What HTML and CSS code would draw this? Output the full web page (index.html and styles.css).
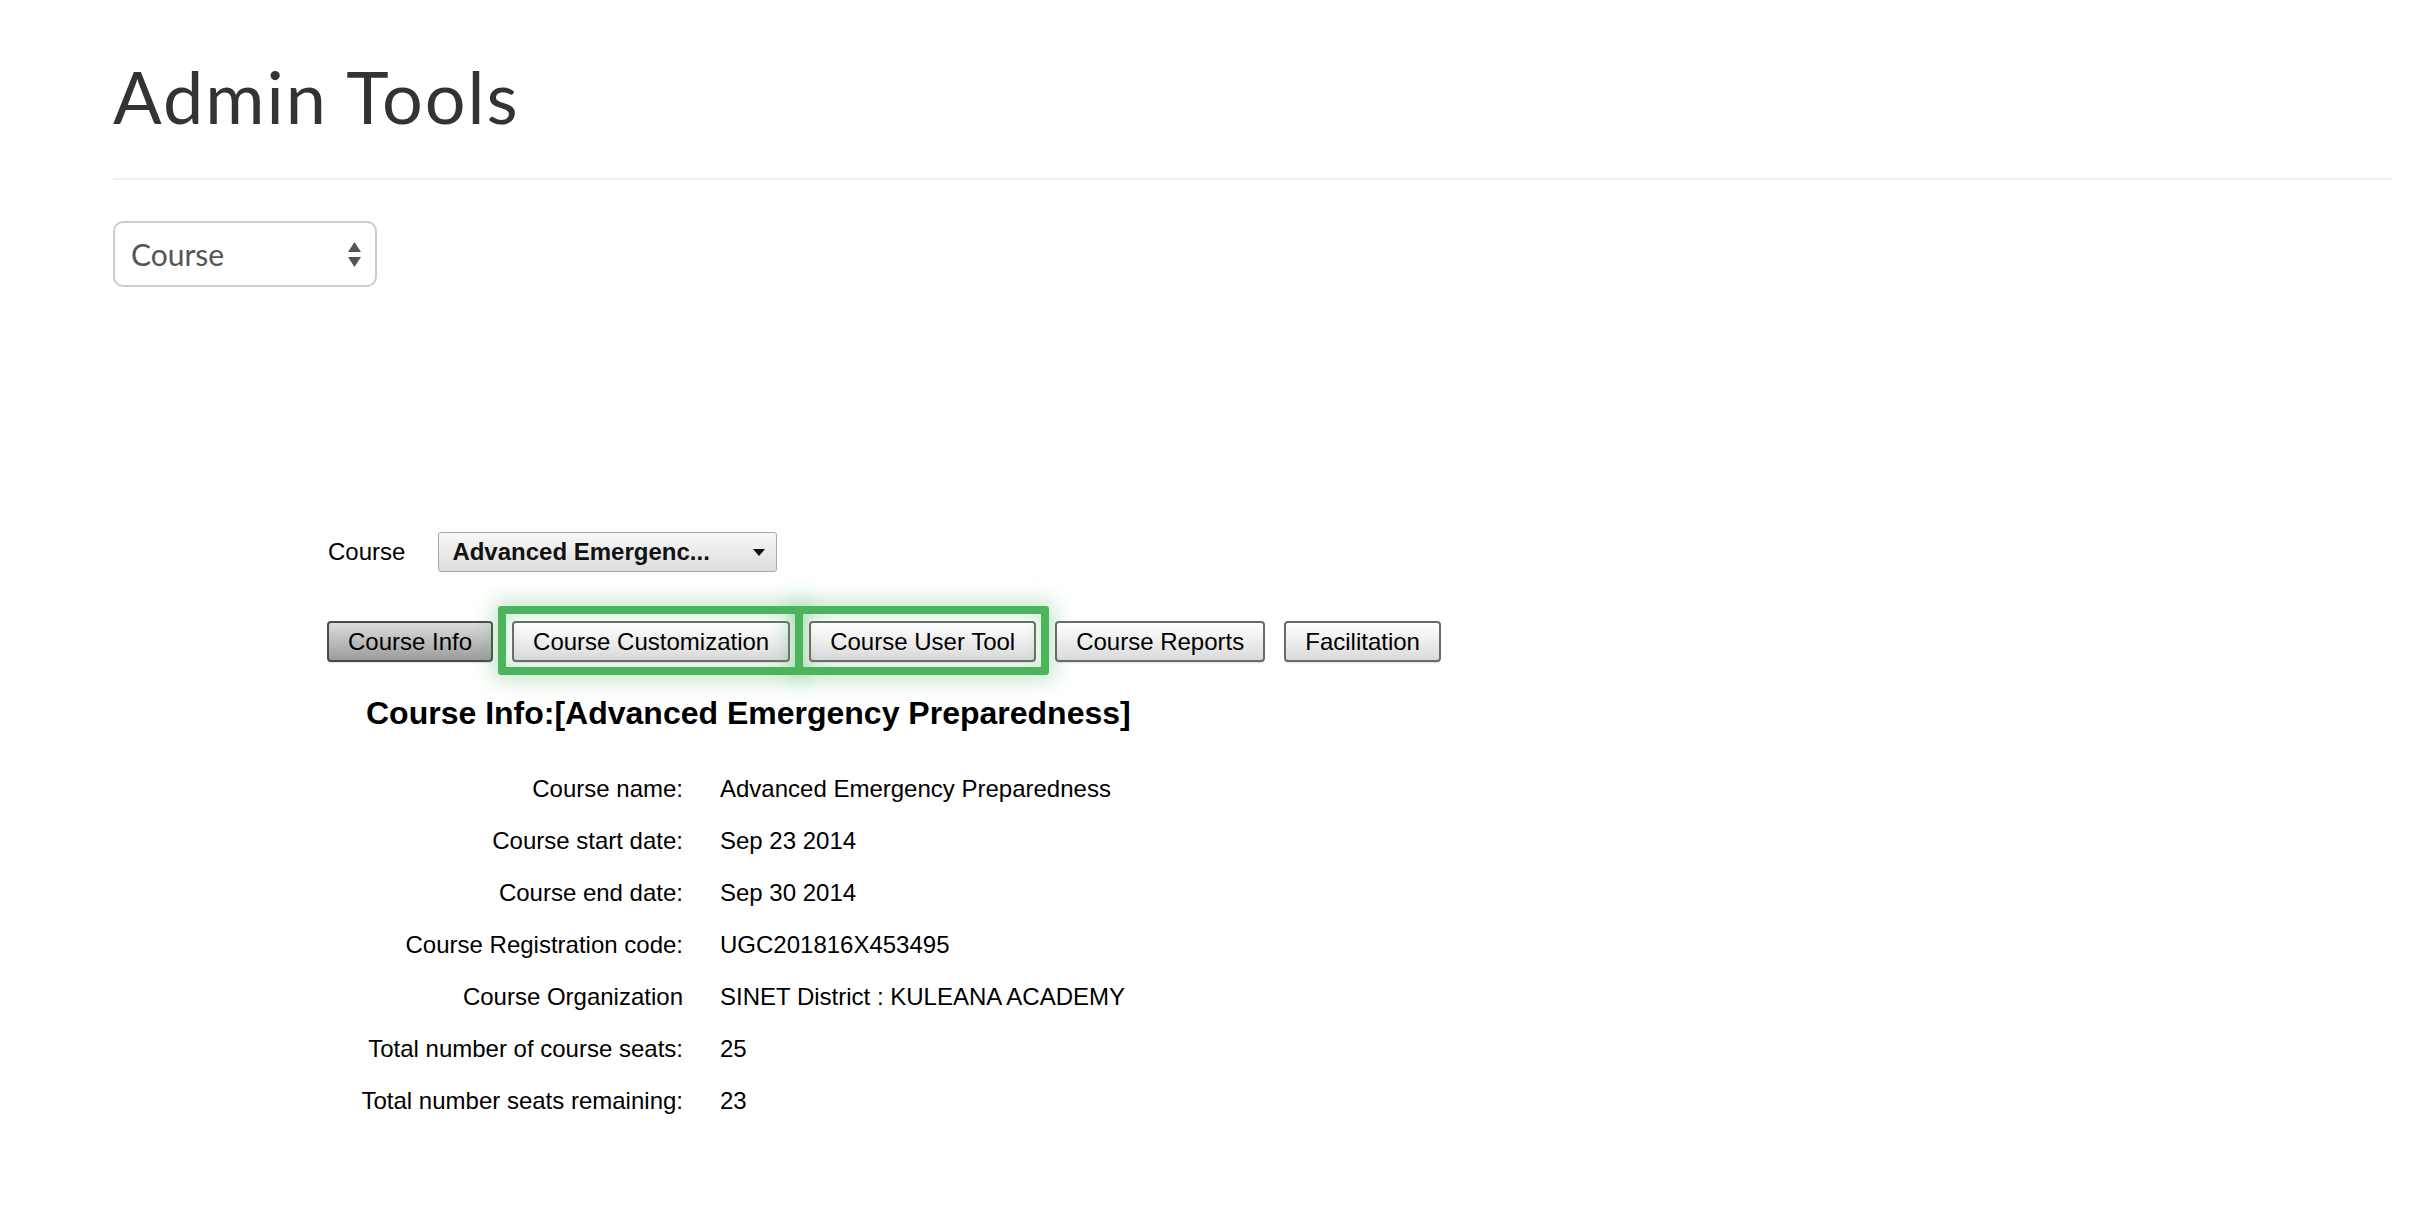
FILE: index.html
```html
<!DOCTYPE html>
<html lang="en">
<head>
<meta charset="utf-8">
<title>Admin Tools</title>
<link rel="stylesheet" href="styles.css">
</head>
<body>
<div class="page">
  <h1 class="title">Admin Tools</h1>
  <hr class="rule">
  <div class="select-lg">
    <span>Course</span>
    <svg class="updown" width="13" height="25" viewBox="0 0 13 25"><path d="M6.5 0 L13 10 L0 10 Z M0 15 L13 15 L6.5 25 Z" fill="#555"/></svg>
  </div>

  <div class="panel">
    <div class="course-row">
      <span class="course-label">Course</span>
      <div class="dropdown">
        <span>Advanced Emergenc...</span>
        <svg width="12" height="7" viewBox="0 0 12 7"><path d="M0 0 L12 0 L6 7 Z" fill="#111"/></svg>
      </div>
    </div>

    <div class="tabs">
      <button class="tab active">Course Info</button>
      <button class="tab hl">Course Customization</button>
      <button class="tab hl">Course User Tool</button>
      <button class="tab">Course Reports</button>
      <button class="tab">Facilitation</button>
    </div>

    <h2 class="info-title">Course Info:[Advanced Emergency Preparedness]</h2>

    <div class="info-grid">
      <div class="k">Course name:</div><div class="v">Advanced Emergency Preparedness</div>
      <div class="k">Course start date:</div><div class="v">Sep 23 2014</div>
      <div class="k">Course end date:</div><div class="v">Sep 30 2014</div>
      <div class="k">Course Registration code:</div><div class="v">UGC201816X453495</div>
      <div class="k">Course Organization</div><div class="v">SINET District : KULEANA ACADEMY</div>
      <div class="k">Total number of course seats:</div><div class="v">25</div>
      <div class="k">Total number seats remaining:</div><div class="v">23</div>
    </div>
  </div>
</div>
</body>
</html>
```
FILE: styles.css
```css
html, body {
  margin: 0;
  padding: 0;
  background: #ffffff;
}

.page {
  padding: 0 40px 0 113px;
}

.title {
  font-family: Lato, "Open Sans", sans-serif;
  font-weight: 400;
  font-size: 72px;
  line-height: 86px;
  letter-spacing: 2px;
  color: #333333;
  margin: 53px 0 0;
}

.rule {
  border: 0;
  height: 2px;
  background: #eeeeee;
  margin: 39px 0 0;
}

.select-lg {
  margin-top: 41px;
  width: 264px;
  height: 66px;
  box-sizing: border-box;
  border: 2px solid #cccccc;
  border-radius: 10px;
  display: flex;
  align-items: center;
  justify-content: space-between;
  padding: 0 14px 0 16px;
  font-family: Lato, "Open Sans", sans-serif;
  font-size: 30px;
  color: #555555;
}

.panel {
  margin: 245px 0 0 214px;
  font-family: "Liberation Sans", Arial, sans-serif;
  font-size: 24px;
  color: #000000;
}

.course-row {
  display: flex;
  align-items: center;
  height: 40px;
}

.course-label {
  margin-left: 1px;
  margin-right: 33px;
}

.dropdown {
  width: 339px;
  height: 40px;
  box-sizing: border-box;
  border: 1px solid #a9a9a9;
  border-radius: 3px;
  background: linear-gradient(#f8f8f8, #dddddd);
  display: flex;
  align-items: center;
  justify-content: space-between;
  padding: 0 11px 0 13px;
  font-weight: 700;
  color: #111111;
}

.tabs {
  display: flex;
  gap: 19px;
  margin-top: 49px;
}

.tab {
  position: relative;
  height: 41px;
  box-sizing: border-box;
  padding: 0 19px;
  font-family: "Liberation Sans", Arial, sans-serif;
  font-size: 24px;
  color: #000000;
  border: 2px solid #6b6b6b;
  border-radius: 4px;
  background: linear-gradient(#ffffff, #dadada);
  box-shadow: 0 1px 1px rgba(0, 0, 0, 0.12);
}

.tab.active {
  border-color: #4a4a4a;
  background: linear-gradient(#dcdcdc, #9c9c9c);
}

.tab.hl::after {
  content: "";
  position: absolute;
  left: -16px;
  right: -15px;
  top: -17px;
  bottom: -15px;
  border: 8px solid #4db45e;
  border-radius: 3px;
  box-shadow: 0 0 20px 6px rgba(77, 180, 94, 0.3), inset 0 0 12px 3px rgba(77, 180, 94, 0.25);
  pointer-events: none;
}

.info-title {
  font-family: "Liberation Sans", Arial, sans-serif;
  font-weight: 700;
  font-size: 32px;
  line-height: 40px;
  margin: 31px 0 0 39px;
}

.info-grid {
  display: grid;
  grid-template-columns: 323px auto;
  column-gap: 37px;
  grid-auto-rows: 52px;
  align-items: center;
  margin: 30px 0 0 33px;
}

.info-grid .k {
  text-align: right;
  white-space: nowrap;
}

.info-grid .v {
  white-space: nowrap;
}
```
